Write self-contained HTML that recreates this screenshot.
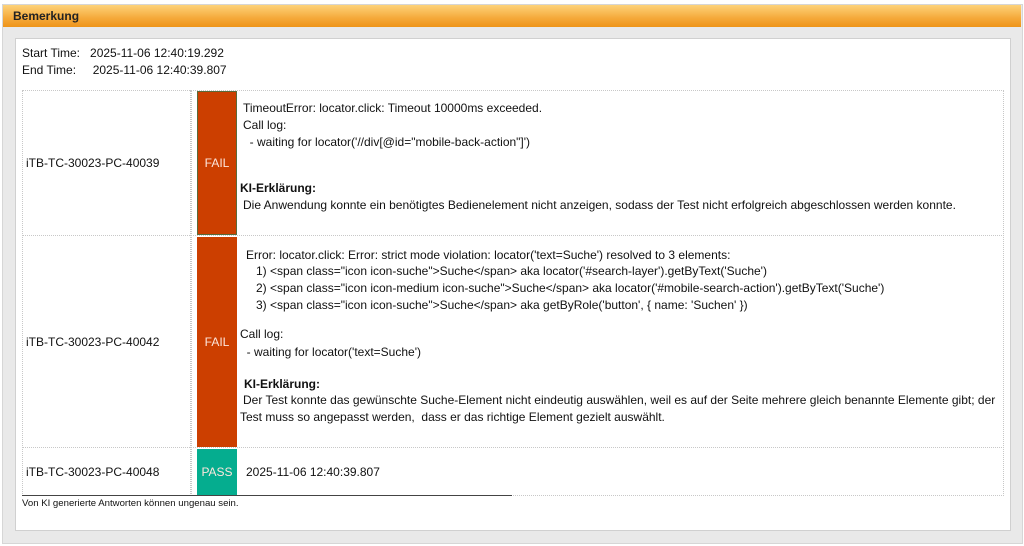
<!DOCTYPE html>
<html><head><meta charset="utf-8"><style>
body{margin:0;width:1024px;height:546px;background:#fff;font-family:"Liberation Sans",Arial,sans-serif;font-size:12px;color:#111;position:relative;overflow:hidden}
.a{position:absolute;white-space:pre;line-height:14px}
#outer{position:absolute;left:2px;top:4px;width:1019px;height:538px;background:#e9e9e9;border:1px solid #d6d6d6}
#hdr{position:absolute;left:3px;top:5px;width:1018px;height:22px;background:linear-gradient(#fdd27a,#f5a93a 60%,#ee9419);}
#hdr span{position:absolute;left:10px;top:4px;font-weight:bold;font-size:12px;color:#222}
#panel{position:absolute;left:15px;top:38px;width:994px;height:491px;background:#fff;border:1px solid #d0d0d0}
.d{position:absolute;border:1px dotted #c8c8c8}
.st{position:absolute;left:197px;width:40px;text-align:center;color:#fde6dc}
</style></head><body>
<div id="outer"></div>
<div id="hdr"><span>Bemerkung</span></div>
<div id="panel"></div>
<div class="a" style="left:22px;top:46px">Start Time:   2025-11-06 12:40:19.292</div>
<div class="a" style="left:22px;top:63px">End Time:     2025-11-06 12:40:39.807</div>

<div class="d" style="left:22px;top:90px;width:980px;height:404px"></div>
<div class="d" style="left:22px;top:90px;width:168px;height:404px;border-top:none;border-bottom:none;border-left:none"></div>
<div class="d" style="left:191px;top:90px;width:5px;height:404px;border-top:none;border-bottom:none;border-right:none"></div>
<div class="d" style="left:22px;top:235px;width:980px;height:0;border-bottom:none"></div>
<div class="d" style="left:22px;top:447px;width:980px;height:0;border-bottom:none"></div>

<div style="position:absolute;left:197px;top:91px;width:40px;height:144px;background:#cc3f00;border:1px solid #5a6a3a;box-sizing:border-box"></div>
<div style="position:absolute;left:197px;top:237px;width:40px;height:210px;background:#cc3f00"></div>
<div style="position:absolute;left:197px;top:449px;width:40px;height:46px;background:#05ad8f"></div>
<div class="a st" style="top:156px">FAIL</div>
<div class="a st" style="top:335px">FAIL</div>
<div class="a st" style="top:465px">PASS</div>
<div style="position:absolute;left:22px;top:495px;width:490px;height:1px;background:#444"></div>

<div class="a" style="left:26px;top:156px">iTB-TC-30023-PC-40039</div>
<div class="a" style="left:26px;top:335px">iTB-TC-30023-PC-40042</div>
<div class="a" style="left:26px;top:465px">iTB-TC-30023-PC-40048</div>

<div class="a" style="left:243px;top:101px">TimeoutError: locator.click: Timeout 10000ms exceeded.</div>
<div class="a" style="left:243px;top:118px">Call log:</div>
<div class="a" style="left:243px;top:135px">  - waiting for locator('//div[@id="mobile-back-action"]')</div>
<div class="a" style="left:240px;top:181px;font-weight:bold">KI-Erklärung:</div>
<div class="a" style="left:243px;top:198px">Die Anwendung konnte ein benötigtes Bedienelement nicht anzeigen, sodass der Test nicht erfolgreich abgeschlossen werden konnte.</div>

<div class="a" style="left:246px;top:248px">Error: locator.click: Error: strict mode violation: locator('text=Suche') resolved to 3 elements:</div>
<div class="a" style="left:246px;top:264px">   1) &lt;span class="icon icon-suche"&gt;Suche&lt;/span&gt; aka locator('#search-layer').getByText('Suche')</div>
<div class="a" style="left:246px;top:281px">   2) &lt;span class="icon icon-medium icon-suche"&gt;Suche&lt;/span&gt; aka locator('#mobile-search-action').getByText('Suche')</div>
<div class="a" style="left:246px;top:298px">   3) &lt;span class="icon icon-suche"&gt;Suche&lt;/span&gt; aka getByRole('button', { name: 'Suchen' })</div>
<div class="a" style="left:240px;top:327px">Call log:</div>
<div class="a" style="left:240px;top:345px">  - waiting for locator('text=Suche')</div>
<div class="a" style="left:244px;top:377px;font-weight:bold">KI-Erklärung:</div>
<div class="a" style="left:243px;top:393px">Der Test konnte das gewünschte Suche-Element nicht eindeutig auswählen, weil es auf der Seite mehrere gleich benannte Elemente gibt; der</div>
<div class="a" style="left:240px;top:410px">Test muss so angepasst werden,  dass er das richtige Element gezielt auswählt.</div>

<div class="a" style="left:246px;top:465px">2025-11-06 12:40:39.807</div>
<div class="a" style="left:22px;top:498px;font-size:9.6px;line-height:11px">Von KI generierte Antworten können ungenau sein.</div>
</body></html>
